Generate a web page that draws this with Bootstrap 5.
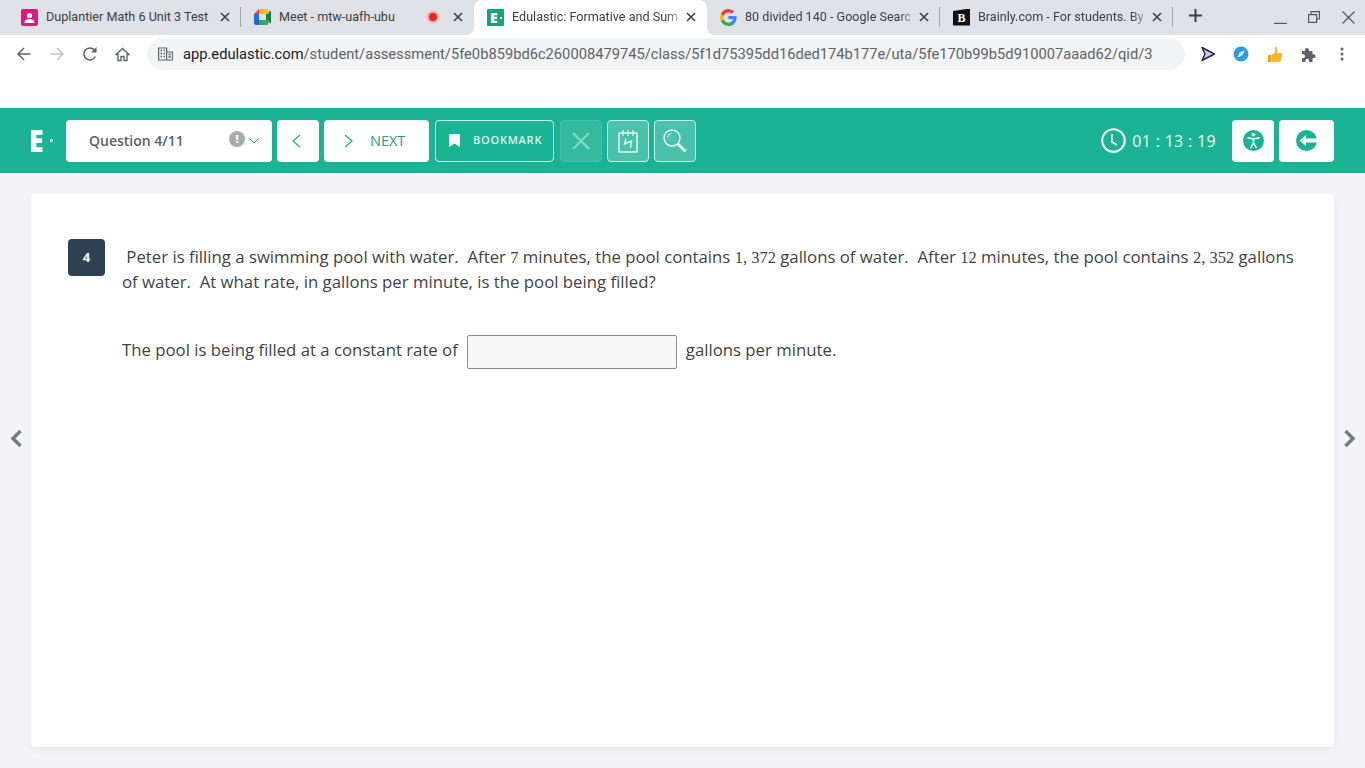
<!DOCTYPE html>
<html lang="en">
<head>
    <meta charset="UTF-8">
    <meta name="viewport" content="width=device-width, initial-scale=1.0">
    <title>Edulastic: Formative and Summative Assessments</title>
    <link href="https://cdn.jsdelivr.net/npm/bootstrap@5.3.3/dist/css/bootstrap.min.css" rel="stylesheet"/>
    <style>
        html, body { height: 768px; overflow: hidden; }
        body { font-family: "Open Sans", sans-serif; background: #f3f3f8; }

        /* browser chrome */
        .tab-strip { height: 35px; background: #dee1e6; padding-left: 8px; font-family: Roboto, sans-serif; }
        .tab-item { width: 233px; height: 35px; padding: 0 11px 1px 13px; font-size: 12.6px; color: #3c4043; position: relative; }
        .tab-item.tab-active { background: #fff; border-radius: 8px 8px 0 0; }
        .tab-active::before, .tab-active::after { content: ""; position: absolute; bottom: 0; width: 8px; height: 8px; }
        .tab-active::before { left: -8px; background: radial-gradient(circle at 0 0, transparent 8px, #fff 8px); }
        .tab-active::after { right: -8px; background: radial-gradient(circle at 100% 0, transparent 8px, #fff 8px); }
        .tab-sep::after { content: ""; position: absolute; right: 0; top: 7px; height: 20px; width: 1px; background: #a4a7ab; }
        .tab-title { margin-left: 8px; white-space: nowrap; flex: 1 1 0; min-width: 0; }
        .tab-fade { -webkit-mask-image: linear-gradient(to right, #000 88%, transparent 100%); mask-image: linear-gradient(to right, #000 88%, transparent 100%); }
        .tab-favicon { width: 17px; height: 17px; flex: none; }
        .fav-edu { background: #1a9f7f; color: #fff; font: 800 14px/17px "Open Sans", sans-serif; padding-left: 3px; border-radius: 1px; position: relative; }
        .fav-edu::after { content: ""; position: absolute; right: 2px; top: 8px; width: 2px; height: 2px; background: #fff; }
        .fav-brainly { background: #111; color: #fff; font: 700 12px/18px "Liberation Serif", serif; text-align: center; clip-path: polygon(0 14%, 100% 0, 100% 100%, 0 100%); }
        .rec-dot { margin-right: 13px; }
        .win-controls { margin-left: auto; padding-bottom: 1px; }
        .win-btn { width: 34px; height: 34px; }

        .tool-row { height: 37px; background: #fff; padding: 1px 0 0 7px; }
        .tool-icon { width: 33px; height: 33px; flex: none; }
        .addr-bar { width: 1038px; height: 32px; margin-left: 8px; background: #f1f3f4; border-radius: 16px; padding-left: 11px; font: 14.7px Roboto, sans-serif; color: #5f6368; }
        .addr-host { color: #202124; }
        .addr-text { margin-left: 10px; white-space: nowrap; }
        .ext-row { margin-left: 6px; }
        .ext-row .tool-icon { width: 33.5px; }

        .page-gap { height: 36px; background: #fff; }

        /* test header */
        .test-bar { height: 65px; background: #1ab394; padding: 0 31px; }
        .logo-box { width: 35px; color: #fff; font: 800 30px/1 "Open Sans", sans-serif; }
        .logo-letter { display: inline-block; width: 14px; margin-left: -2px; transform: scaleX(.9); transform-origin: left center; }
        .logo-dot { width: 3px; height: 3px; background: #fff; border-radius: 50%; margin-left: 7px; }
        .white-btn { height: 42px; background: #fff; border-radius: 4px; color: #1ab394; }
        .q-select { width: 206px; padding: 0 13px 0 23px; color: #5b5f63; font-size: 14px; font-weight: 600; }
        .warn-dot { width: 16px; height: 16px; margin-top: -3px; border-radius: 50%; background: #a9aaab; color: #fff; font-size: 11px; font-weight: 800; line-height: 16px; text-align: center; }
        .prev-btn { width: 42px; margin-left: 5px; padding-right: 4px; }
        .next-btn { width: 105px; margin-left: 5px; padding-left: 20px; font-size: 14.5px; color: #2a9d86; }
        .next-arrow { margin-right: 17px; }
        .line-btn { height: 42px; border: 1px solid #d2f0ea; border-radius: 4px; color: #dff5f0; }
        .bookmark-btn { width: 119px; margin-left: 6px; padding-left: 13px; font-size: 11px; font-weight: 600; letter-spacing: .07em; }
        .bookmark-icon { margin-right: 13px; }
        .square-btn { width: 42px; margin-left: 5px; background: #48c2aa; }
        .square-off { margin-left: 6px; background: #33ba9f; border-color: #46c1a8; }
        .timer-box { color: #e9f8f5; font-size: 16px; letter-spacing: .02em; margin-left: auto; }
        .clock-icon { margin-right: 6px; }
        .access-btn { width: 42px; margin-left: 16px; }
        .exit-btn { width: 55px; margin-left: 5px; }

        /* question area */
        .side-gutter { width: 31px; flex: none; padding-top: 256px; }
        .q-card { height: 553px; margin-top: 21px; flex: 1 1 0; background: #fff; border-radius: 4px; box-shadow: 0 2px 6px rgba(0, 0, 0, .06); padding: 45px 36px 0 37px; color: #3f4347; font-size: 16.75px; line-height: 25px; }
        .q-num { width: 37px; height: 37px; flex: none; margin-right: 17px; background: #2f4253; color: #fff; border-radius: 4px; font-size: 13px; font-weight: 700; }
        .q-body { padding-top: 5px; }
        .math-num { font-family: "Liberation Serif", serif; font-size: 16.5px; line-height: 1; }
        .answer-line { margin-top: 36px; }
        .answer-input { width: 210px; height: 34px; margin: 5px 9px 0; background: #f8f8f8; border: 1px solid #8e8e8e; border-radius: 2px; }
    </style>
</head>
<body>

<!-- Tab strip -->
<div class="tab-strip d-flex">
    <div class="tab-item tab-sep d-flex align-items-center">
        <svg class="tab-favicon" viewBox="0 0 17 17"><rect width="17" height="17" rx="2" fill="#d81b7d"/><circle cx="8.5" cy="6.5" r="2.6" fill="#fff"/><path d="M3.500 14c0-2.800 2.400-4 5-4s5 1.200 5 4z" fill="#fff"/></svg>
        <span class="tab-title">Duplantier Math 6 Unit 3 Test</span>
        <svg width="10" height="10" viewBox="0 0 10 10"><path d="M1 1l8 8M9 1l-8 8" stroke="#3c4043" stroke-width="1.600"/></svg>
    </div>
    <div class="tab-item d-flex align-items-center">
        <svg class="tab-favicon" viewBox="0 0 17 17"><path d="M0 5l5-5v5z" fill="#ea4335"/><rect x="5" width="7" height="5" fill="#fbbc04"/><rect y="5" width="5" height="6" fill="#1a73e8"/><path d="M0 11h5v5H2a2 2 0 0 1-2-2z" fill="#1967d2"/><rect x="5" y="11" width="7" height="5" fill="#34a853"/><path d="M12 5l5-3.500v13L12 11z" fill="#188038"/><path d="M12 0v5h2.500V2a2 2 0 0 0-2-2z" fill="#fbbc04"/><path d="M12 16v-5h2.500v3a2 2 0 0 1-2 2z" fill="#34a853"/></svg>
        <span class="tab-title">Meet - mtw-uafh-ubu</span>
        <svg class="rec-dot" width="14" height="14" viewBox="0 0 14 14"><circle cx="7" cy="7" r="6.500" fill="#f6b5af"/><circle cx="7" cy="7" r="4.200" fill="#dd2c22"/></svg>
        <svg width="10" height="10" viewBox="0 0 10 10"><path d="M1 1l8 8M9 1l-8 8" stroke="#3c4043" stroke-width="1.600"/></svg>
    </div>
    <div class="tab-item tab-active d-flex align-items-center">
        <div class="tab-favicon fav-edu">E</div>
        <span class="tab-title tab-fade">Edulastic: Formative and Sum</span>
        <svg width="10" height="10" viewBox="0 0 10 10"><path d="M1 1l8 8M9 1l-8 8" stroke="#3c4043" stroke-width="1.600"/></svg>
    </div>
    <div class="tab-item tab-sep d-flex align-items-center">
        <svg class="tab-favicon" viewBox="0 0 18 18"><path d="M17.600 9.200c0-.6-.1-1.200-.2-1.800H9v3.400h4.800a4.100 4.100 0 0 1-1.800 2.700v2.200h2.900c1.700-1.500 2.700-3.800 2.700-6.500z" fill="#4285f4"/><path d="M9 18c2.400 0 4.500-.8 5.900-2.200L12 13.600c-.8.500-1.800.9-3 .9-2.300 0-4.300-1.600-5-3.700H1v2.300A9 9 0 0 0 9 18z" fill="#34a853"/><path d="M4 10.700a5.400 5.400 0 0 1 0-3.400V5H1a9 9 0 0 0 0 8z" fill="#fbbc05"/><path d="M9 3.600c1.300 0 2.500.5 3.400 1.300L15 2.400A9 9 0 0 0 1 5l3 2.300c.7-2.100 2.700-3.700 5-3.700z" fill="#ea4335"/></svg>
        <span class="tab-title tab-fade">80 divided 140 - Google Searc</span>
        <svg width="10" height="10" viewBox="0 0 10 10"><path d="M1 1l8 8M9 1l-8 8" stroke="#3c4043" stroke-width="1.600"/></svg>
    </div>
    <div class="tab-item tab-sep d-flex align-items-center">
        <div class="tab-favicon fav-brainly">B</div>
        <span class="tab-title tab-fade">Brainly.com - For students. By</span>
        <svg width="10" height="10" viewBox="0 0 10 10"><path d="M1 1l8 8M9 1l-8 8" stroke="#3c4043" stroke-width="1.600"/></svg>
    </div>
    <svg class="ms-3 align-self-center mb-1" width="13" height="13" viewBox="0 0 13 13"><path d="M6.500 0v13M0 6.500h13" stroke="#3c4043" stroke-width="2"/></svg>
    <div class="win-controls d-flex align-items-center">
        <div class="win-btn d-flex align-items-center justify-content-center"><svg width="13" height="13" viewBox="0 0 13 13"><path d="M0 12.400h13" stroke="#55585c" stroke-width="1.200"/></svg></div>
        <div class="win-btn d-flex align-items-center justify-content-center"><svg width="12" height="12" viewBox="0 0 12 12"><path d="M3 3V.6h8.400V8H9M.6 3.600h8v7.800h-8z" fill="none" stroke="#55585c" stroke-width="1.200"/></svg></div>
        <div class="win-btn d-flex align-items-center justify-content-center"><svg width="13" height="13" viewBox="0 0 13 13"><path d="M.5.500l12 12M12.500.5l-12 12" stroke="#55585c" stroke-width="1.300"/></svg></div>
    </div>
</div>

<!-- Address row -->
<div class="tool-row d-flex align-items-center">
    <div class="tool-icon d-flex align-items-center justify-content-center"><svg width="14" height="14" viewBox="0 0 14 14"><path d="M13.500 7H1M7 1L1 7l6 6" fill="none" stroke="#5f6368" stroke-width="1.500"/></svg></div>
    <div class="tool-icon d-flex align-items-center justify-content-center"><svg width="14" height="14" viewBox="0 0 14 14"><path d="M.5 7H13M7 1l6 6-6 6" fill="none" stroke="#bdc1c6" stroke-width="1.500"/></svg></div>
    <div class="tool-icon d-flex align-items-center justify-content-center"><svg width="16" height="16" viewBox="0 0 16 16"><path d="M13.300 10.500A6 6 0 1 1 12.300 3.800L14 5.500" fill="none" stroke="#5f6368" stroke-width="1.500"/><path d="M14.500 1v5.500H9z" fill="#5f6368"/></svg></div>
    <div class="tool-icon d-flex align-items-center justify-content-center"><svg width="15" height="15" viewBox="0 0 15 15"><path d="M7.500 1.500L1 7.500h2v6h3v-4h3v4h3v-6h2z" fill="none" stroke="#5f6368" stroke-width="1.400"/></svg></div>
    <div class="addr-bar d-flex align-items-center">
        <svg width="15" height="14" viewBox="0 0 15 14"><path d="M.6 1h8v12h-8zM8.600 5h6v8h-6z" fill="none" stroke="#5f6368" stroke-width="1.200"/><path d="M2.500 3.500H4M5.500 3.500H7M2.500 6.500H4M5.500 6.500H7M2.500 9.500H4M5.500 9.500H7M10.500 7.500h2.500M10.500 10h2.500" stroke="#5f6368" stroke-width="1.300"/></svg>
        <span class="addr-text"><span class="addr-host">app.edulastic.com</span>/student/assessment/5fe0b859bd6c260008479745/class/5f1d75395dd16ded174b177e/uta/5fe170b99b5d910007aaad62/qid/3</span>
    </div>
    <div class="ext-row d-flex align-items-center">
        <div class="tool-icon d-flex align-items-center justify-content-center"><svg width="16" height="16" viewBox="0 0 16 16"><path d="M2 1.500l12.500 6.500L2 14.500l3-6.500z" fill="#c8cbee" stroke="#26284d" stroke-width="1.500" stroke-linejoin="round"/></svg></div>
        <div class="tool-icon d-flex align-items-center justify-content-center"><svg width="16" height="16" viewBox="0 0 16 16"><circle cx="8" cy="8" r="7.500" fill="#2b9be4"/><path d="M11.500 4.500L9.300 9.300 4.500 11.500l2.200-4.800z" fill="#fff"/></svg></div>
        <div class="tool-icon d-flex align-items-center justify-content-center"><svg width="16" height="17" viewBox="0 0 16 17"><path d="M1 9h3.500v7H1z" fill="#e8a21c"/><path d="M5 9l3-3V1.500C8 .5 10 .3 10.200 2v5h3.600c1.400 0 1.700 1.200 1.400 2.200l-1.500 5.700c-.2.700-.8 1.100-1.500 1.100H5z" fill="#f5b92e"/></svg></div>
        <div class="tool-icon d-flex align-items-center justify-content-center"><svg width="15" height="15" viewBox="0 0 15 15"><path d="M1 4h3V3a2 2 0 0 1 4 0v1h3.500v3.200h1a2 2 0 0 1 0 4h-1V15H8v-1.500a1.800 1.800 0 0 0-3.600 0V15H1v-3.800h1a2 2 0 0 0 0-4H1z" fill="#5f6368"/></svg></div>
        <div class="tool-icon d-flex align-items-center justify-content-center"><svg width="4" height="14" viewBox="0 0 4 14"><circle cx="2" cy="2" r="1.500" fill="#5f6368"/><circle cx="2" cy="7" r="1.500" fill="#5f6368"/><circle cx="2" cy="12" r="1.500" fill="#5f6368"/></svg></div>
    </div>
</div>
<div class="page-gap"></div>

<!-- Test header -->
<div class="test-bar d-flex align-items-center">
    <div class="logo-box d-flex align-items-center"><span class="logo-letter">E</span><span class="logo-dot"></span></div>
    <div class="white-btn q-select d-flex align-items-center">
        <span class="flex-grow-1">Question 4/11</span>
        <span class="warn-dot">!</span>
        <svg class="ms-1" width="10" height="6" viewBox="0 0 10 6"><path d="M.5.500L5 5 9.500.5" fill="none" stroke="#1ab394"/></svg>
    </div>
    <div class="white-btn prev-btn d-flex align-items-center justify-content-center"><svg width="9" height="14" viewBox="0 0 9 14"><path d="M8 1L1 7l7 6" fill="none" stroke="#1ab394" stroke-width="1.200"/></svg></div>
    <div class="white-btn next-btn d-flex align-items-center"><svg class="next-arrow" width="9" height="14" viewBox="0 0 9 14"><path d="M1 1l7 6-7 6" fill="none" stroke="#1ab394" stroke-width="1.200"/></svg>NEXT</div>
    <div class="line-btn bookmark-btn d-flex align-items-center"><svg class="bookmark-icon" width="11" height="13" viewBox="0 0 11 13"><path d="M0 0h11v13L5.500 9.500 0 13z" fill="#fff"/></svg>BOOKMARK</div>
    <div class="line-btn square-btn square-off d-flex align-items-center justify-content-center"><svg width="18" height="18" viewBox="0 0 18 18"><path d="M1 1l16 16M17 1L1 17" stroke="#86d6c6" stroke-width="2.400"/></svg></div>
    <div class="line-btn square-btn d-flex align-items-center justify-content-center"><svg width="20" height="24" viewBox="0 0 20 24"><path d="M1 4h18v19H1z" fill="none" stroke="#e8f8f5" stroke-width="1.400"/><path d="M5 1v6M10 1v6M15 1v6" stroke="#e8f8f5" stroke-width="1.200"/><path d="M8 9.500L6.500 15l7-3-1 7" fill="none" stroke="#e8f8f5" stroke-width="1.400"/></svg></div>
    <div class="line-btn square-btn d-flex align-items-center justify-content-center"><svg width="24" height="24" viewBox="0 0 24 24"><circle cx="9" cy="9" r="8" fill="none" stroke="#e8f8f5" stroke-width="1.400"/><path d="M4.500 8.500A4.500 4.500 0 0 1 8.500 4.500" fill="none" stroke="#e8f8f5"/><path d="M15 15l7.500 7.500" stroke="#e8f8f5" stroke-width="3"/></svg></div>
    <div class="timer-box d-flex align-items-center">
        <svg class="clock-icon" width="25" height="25" viewBox="0 0 25 25"><circle cx="12.500" cy="12.500" r="11.300" fill="none" stroke="#f2fbf9" stroke-width="2"/><path d="M11 6v8l5 3" fill="none" stroke="#f2fbf9" stroke-width="1.600"/></svg>
        <span>01 : 13 : 19</span>
    </div>
    <div class="white-btn access-btn d-flex align-items-center justify-content-center"><svg width="21" height="21" viewBox="0 0 21 21"><circle cx="10.500" cy="10.500" r="10.500" fill="#1ab394"/><circle cx="10.500" cy="4.800" r="1.800" fill="#fff"/><path d="M5 7.800l5.500 1.200L16 7.800M10.500 9v3.500M10.500 12.500L8 17.500M10.500 12.500l2.500 5" fill="none" stroke="#fff" stroke-width="1.600" stroke-linecap="round"/></svg></div>
    <div class="white-btn exit-btn d-flex align-items-center justify-content-center"><svg width="21" height="21" viewBox="0 0 21 21"><circle cx="10.500" cy="10.500" r="10.500" fill="#1ab394"/><path d="M3.500 10.500L10 5v3.500h11v4H10V16z" fill="#fff"/></svg></div>
</div>

<!-- Question area -->
<div class="d-flex">
    <div class="side-gutter d-flex justify-content-center"><svg width="14" height="19" viewBox="0 0 14 19"><path d="M11.500 2L4 9.500l7.500 7.500" fill="none" stroke="#787a80" stroke-width="3.500"/></svg></div>
    <div class="q-card d-flex">
        <div class="q-num d-flex align-items-center justify-content-center">4</div>
        <div class="q-body">
            <div>&nbsp;Peter is filling a swimming pool with water.&nbsp; After <span class="math-num">7</span> minutes, the pool contains <span class="math-num">1, 372</span> gallons of water.&nbsp; After <span class="math-num">12</span> minutes, the pool contains <span class="math-num">2, 352</span> <span>gallons</span> <span>of water.&nbsp; At what rate, in gallons per minute, is the pool being filled?</span></div>
            <div class="answer-line d-flex align-items-center">
                <span>The pool is being filled at a constant rate of</span>
                <div class="answer-input"></div>
                <span>gallons per minute.</span>
            </div>
        </div>
    </div>
    <div class="side-gutter d-flex justify-content-center"><svg width="14" height="19" viewBox="0 0 14 19"><path d="M2.500 2L10 9.500 2.500 17" fill="none" stroke="#787a80" stroke-width="3.500"/></svg></div>
</div>

<script src="https://cdn.jsdelivr.net/npm/bootstrap@5.3.3/dist/js/bootstrap.bundle.min.js"></script>
</body>
</html>
